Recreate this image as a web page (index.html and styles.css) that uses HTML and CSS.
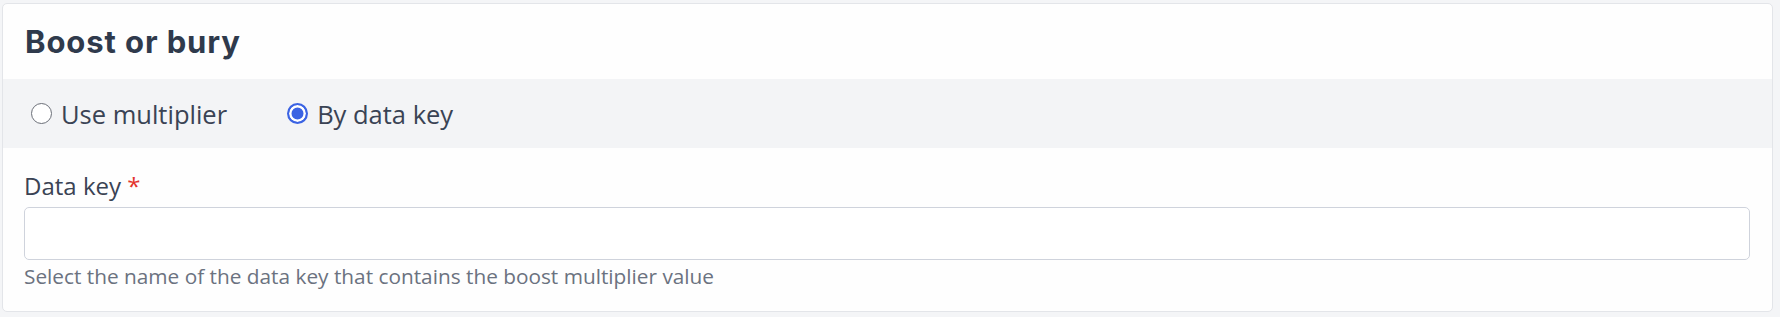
FILE: index.html
```html
<!DOCTYPE html>
<html lang="en">
<head>
<meta charset="utf-8">
<title>Boost or bury</title>
<link rel="stylesheet" href="styles.css">
</head>
<body>
<section class="card">
  <header class="card-header">
    <h2 class="card-title">Boost or bury</h2>
  </header>
  <div class="mode-band">
    <label class="radio-option">
      <span class="radio"></span>
      <span class="radio-label">Use multiplier</span>
    </label>
    <label class="radio-option">
      <span class="radio radio-checked"></span>
      <span class="radio-label">By data key</span>
    </label>
  </div>
  <div class="field">
    <div class="field-label">Data key <span class="required">*</span></div>
    <div class="field-input"></div>
    <div class="field-help">Select the name of the data key that contains the boost multiplier value</div>
  </div>
</section>
</body>
</html>
```
FILE: styles.css
```css
html, body {
  margin: 0;
  padding: 0;
}
body {
  background: #f4f5f7;
  font-family: "Open Sans", "Noto Sans", sans-serif;
  color: #374151;
  width: 1780px;
  height: 317px;
  overflow: hidden;
}
.card {
  box-sizing: border-box;
  margin: 3px 7px 0 2px;
  height: 309px;
  background: #fefefe;
  border: 1px solid #e3e5e9;
  border-radius: 5px;
  display: flex;
  flex-direction: column;
  overflow: hidden;
}
.card-header {
  height: 75px;
  display: flex;
  align-items: center;
  padding: 0 22px;
  box-sizing: border-box;
}
.card-title {
  margin: 0;
  font-family: "Inter", sans-serif;
  font-weight: 700;
  font-size: 31px;
  color: #2f3a4c;
  letter-spacing: 0.9px;
}
.mode-band {
  height: 69px;
  background: #f3f4f6;
  display: flex;
  align-items: center;
  padding: 0 28px;
  gap: 60px;
  box-sizing: border-box;
}
.radio-option {
  display: flex;
  align-items: center;
  gap: 9px;
}
.radio {
  box-sizing: border-box;
  width: 21px;
  height: 21px;
  border-radius: 50%;
  border: 1.5px solid #6b6f78;
  background: #fff;
}
.radio-checked {
  border: 2px solid #3b63e3;
  background: #3b63e3;
  box-shadow: inset 0 0 0 2.5px #fff;
}
.radio-label {
  font-size: 25.5px;
  color: #3a4354;
}
.field {
  padding: 22px 22px 0 21px;
  display: flex;
  flex-direction: column;
}
.field-label {
  font-size: 24px;
  line-height: 32px;
  color: #3a4354;
}
.required {
  color: #e3342f;
}
.field-input {
  margin-top: 5px;
  height: 53px;
  box-sizing: border-box;
  border: 1px solid #cfd3dc;
  border-radius: 5px;
  background: #fff;
  width: 1726px;
}
.field-help {
  margin-top: 3px;
  font-size: 20.8px;
  line-height: 26px;
  color: #6b7280;
}
```
